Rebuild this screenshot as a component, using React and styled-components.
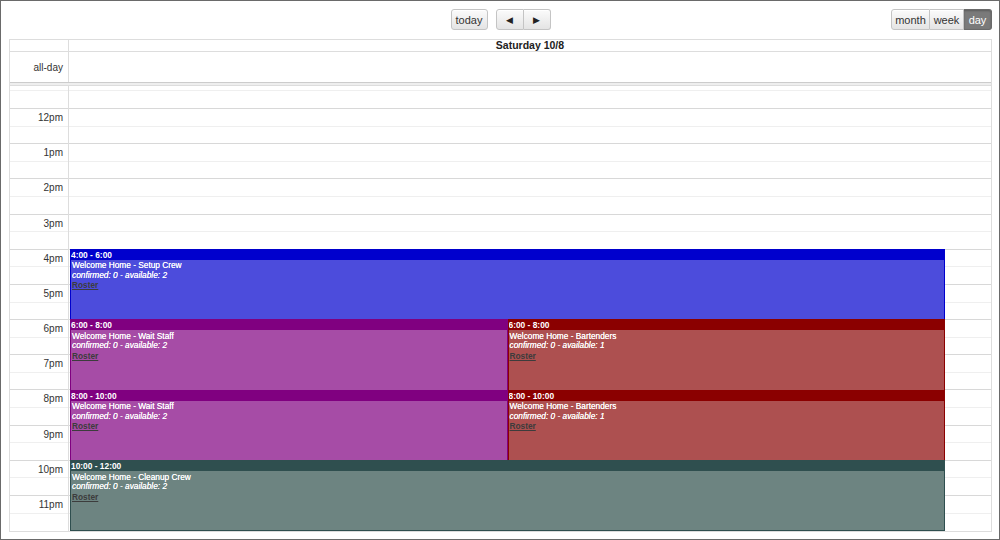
import React from 'react';
import styled, { createGlobalStyle } from 'styled-components';

const GlobalStyle = createGlobalStyle`
  html, body { margin: 0; padding: 0; background: #fff; }
  body { font-family: "Liberation Sans", Arial, sans-serif; }
`;

const SLOT = 17.6;
const HOUR = SLOT * 2;
const FIRST_HOUR = 12; // first full hour line (12pm)
const GRID_OFFSET = 22; // px from slot area top to the 12pm line

const Frame = styled.div`
  box-sizing: border-box;
  width: 1000px;
  height: 540px;
  border: 1px solid #6a6a6a;
  padding: 8px 7px 0 8px;
  overflow: hidden;
`;

const Toolbar = styled.div`
  display: grid;
  grid-template-columns: 1fr auto 1fr;
  align-items: center;
  height: 21px;
  margin-bottom: 9px;
`;

const Center = styled.div`
  display: flex;
  gap: 8px;
`;

const Right = styled.div`
  display: flex;
  justify-content: flex-end;
`;

const Group = styled.div`
  display: flex;
`;

const Button = styled.button`
  box-sizing: border-box;
  height: 21px;
  width: ${({ w }) => w}px;
  padding: 0;
  margin: 0;
  font-family: "Liberation Sans", Arial, sans-serif;
  font-size: 11px;
  color: ${({ active }) => (active ? '#fff' : '#333')};
  background: ${({ active }) =>
    active ? '#7a7a7a' : 'linear-gradient(#fbfbfb, #e4e4e4)'};
  border: 1px solid ${({ active }) => (active ? '#6a6a6a' : '#c4c4c4')};
  border-left-width: ${({ joined }) => (joined ? 0 : 1)}px;
  border-radius: ${({ pos }) =>
    pos === 'first' ? '3px 0 0 3px' : pos === 'last' ? '0 3px 3px 0' : pos === 'single' ? '3px' : '0'};
  box-shadow: ${({ active }) => (active ? 'inset 0 1px 2px rgba(0,0,0,0.25)' : 'inset 0 1px 0 #fff')};
  display: flex;
  align-items: center;
  justify-content: center;
`;

const Arrow = styled.span`
  font-size: 9px;
  color: #222;
`;

const Table = styled.div`
  border: 1px solid #ddd;
  display: grid;
  grid-template-columns: 58px 1fr;
`;

const HeadCell = styled.div`
  height: 11px;
  border-bottom: 1px solid #ddd;
  border-left: ${({ first }) => (first ? 'none' : '1px solid #ddd')};
  font-size: 10.5px;
  font-weight: bold;
  color: #222;
  text-align: center;
  line-height: 11px;
  background: #fff;
`;

const AllDayLabel = styled.div`
  height: 30px;
  font-size: 10px;
  color: #333;
  display: flex;
  align-items: center;
  justify-content: flex-end;
  padding-right: 5px;
`;

const AllDayCell = styled.div`
  height: 30px;
  border-left: 1px solid #ddd;
`;

const Divider = styled.div`
  grid-column: 1 / span 2;
  height: 2px;
  background: #eee;
  border-top: 1px solid #ccc;
  border-bottom: 1px solid #ddd;
`;

const SlotArea = styled.div`
  grid-column: 1 / span 2;
  height: 445px;
  overflow: hidden;
  position: relative;
  display: grid;
  grid-template-columns: 58px 1fr;
`;

const AxisCol = styled.div`
  display: flex;
  flex-direction: column;
`;

const DayCol = styled.div`
  border-left: 1px solid #ddd;
  position: relative;
  display: flex;
  flex-direction: column;
`;

const Slot = styled.div`
  box-sizing: border-box;
  flex: 0 0 ${({ h }) => h}px;
  min-height: 0;
  border-top: ${({ major, none }) => (none ? 'none' : major ? '1px solid #d8d8d8' : '1px solid #efefef')};
`;

const HourLabel = styled.div`
  box-sizing: border-box;
  flex: 0 0 ${({ h }) => h}px;
  min-height: 0;
  overflow: visible;
  border-top: ${({ major, none }) => (none ? 'none' : major ? '1px solid #d8d8d8' : '1px solid #efefef')};
  font-size: 10px;
  color: #333;
  text-align: right;
  padding-right: 5px;
  line-height: ${SLOT}px;
  height: ${({ h }) => h}px;
`;

const EventsLayer = styled.div`
  position: absolute;
  top: 0;
  bottom: 0;
  left: 1px;
  right: 46px;
`;

const Event = styled.div`
  position: absolute;
  box-sizing: border-box;
  border: 1px solid ${({ color }) => color};
  background: ${({ color }) => color};
  overflow: hidden;
  color: #fff;
`;

const EventBody = styled.div`
  position: absolute;
  top: 10px;
  left: 0;
  right: 0;
  bottom: 0;
  background: ${({ color }) => color};
  padding: 1.5px 1px 0 1px;
`;

const EventTime = styled.div`
  height: 10px;
  line-height: 10px;
  font-size: 8.4px;
  font-weight: bold;
`;

const EventLine = styled.div`
  font-size: 8.3px;
  line-height: 9.5px;
  font-style: ${({ italic }) => (italic ? 'italic' : 'normal')};
  white-space: nowrap;
  text-shadow: 0 0 0.3px #fff;
`;

const Roster = styled.a`
  display: block;
  font-size: 8.3px;
  line-height: 10px;
  font-weight: bold;
  color: #3c3c3c;
  text-decoration: underline;
`;

const events = [
  { start: 16, end: 18, label: '4:00 - 6:00', title: 'Welcome Home - Setup Crew', available: 2, color: '#0000cd', body: '#4c4cdc', col: 0, cols: 1 },
  { start: 18, end: 20, label: '6:00 - 8:00', title: 'Welcome Home - Wait Staff', available: 2, color: '#800080', body: '#a64ca6', col: 0, cols: 2 },
  { start: 18, end: 20, label: '6:00 - 8:00', title: 'Welcome Home - Bartenders', available: 1, color: '#8b0000', body: '#ad5050', col: 1, cols: 2 },
  { start: 20, end: 22, label: '8:00 - 10:00', title: 'Welcome Home - Wait Staff', available: 2, color: '#800080', body: '#a64ca6', col: 0, cols: 2 },
  { start: 20, end: 22, label: '8:00 - 10:00', title: 'Welcome Home - Bartenders', available: 1, color: '#8b0000', body: '#ad5050', col: 1, cols: 2 },
  { start: 22, end: 24, label: '10:00 - 12:00', title: 'Welcome Home - Cleanup Crew', available: 2, color: '#2f4f4f', body: '#6d8481', col: 0, cols: 1 },
];

const hourName = (h) => (h === 12 ? '12pm' : `${h - 12}pm`);

const buildSlots = () => {
  const rows = [{ key: 'tail', h: GRID_OFFSET - SLOT, none: true }, { key: '1130', h: SLOT, major: false }];
  for (let h = FIRST_HOUR; h < 24; h++) {
    rows.push({ key: `${h}a`, h: SLOT, major: true, label: hourName(h) });
    rows.push({ key: `${h}b`, h: SLOT, major: false });
  }
  return rows;
};

const slots = buildSlots();

const App = () => {
  return (
    <>
      <GlobalStyle />
      <Frame>
        <Toolbar>
          <div />
          <Center>
            <Button w={37} pos="single">today</Button>
            <Group>
              <Button w={28} pos="first"><Arrow>◀</Arrow></Button>
              <Button w={27} pos="last" joined><Arrow>▶</Arrow></Button>
            </Group>
          </Center>
          <Right>
            <Group>
              <Button w={39} pos="first">month</Button>
              <Button w={34} joined>week</Button>
              <Button w={28} pos="last" joined active>day</Button>
            </Group>
          </Right>
        </Toolbar>

        <Table>
          <HeadCell first />
          <HeadCell>Saturday 10/8</HeadCell>
          <AllDayLabel>all-day</AllDayLabel>
          <AllDayCell />
          <Divider />
          <SlotArea>
            <AxisCol>
              {slots.map((s) => (
                <HourLabel key={s.key} h={s.h} major={s.major} none={s.none}>
                  {s.label || ''}
                </HourLabel>
              ))}
            </AxisCol>
            <DayCol>
              {slots.map((s) => (
                <Slot key={s.key} h={s.h} major={s.major} none={s.none} />
              ))}
              <EventsLayer>
                {events.map((e, i) => {
                  const top = GRID_OFFSET + (e.start - FIRST_HOUR) * HOUR;
                  const height = (e.end - e.start) * HOUR + 1;
                  return (
                    <Event
                      key={i}
                      color={e.color}
                      style={{
                        top,
                        height,
                        left: `${(e.col / e.cols) * 100}%`,
                        width: `${100 / e.cols}%`,
                      }}
                    >
                      <EventTime>{e.label}</EventTime>
                      <EventBody color={e.body}>
                        <EventLine>{e.title}</EventLine>
                        <EventLine italic>confirmed: 0 - available: {e.available}</EventLine>
                        <Roster href="#">Roster</Roster>
                      </EventBody>
                    </Event>
                  );
                })}
              </EventsLayer>
            </DayCol>
          </SlotArea>
        </Table>
      </Frame>
    </>
  );
};

export default App;
